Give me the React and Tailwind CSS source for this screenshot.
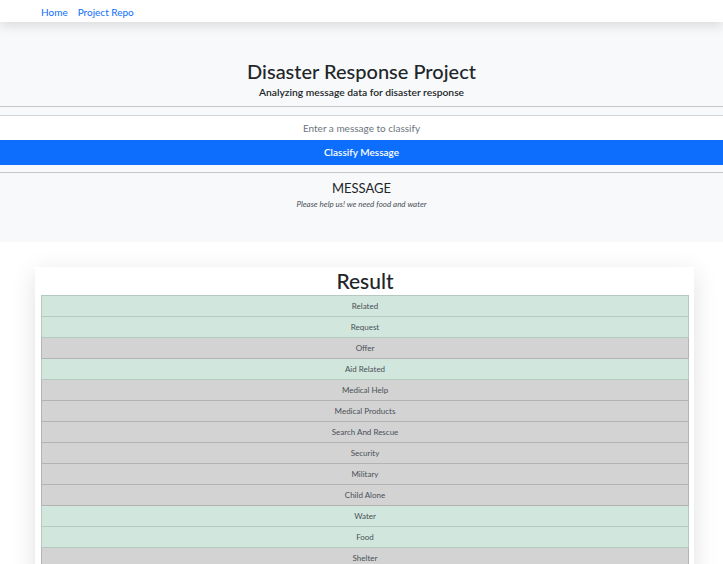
import React from 'react';

const categories = [
  ['Related', true],
  ['Request', true],
  ['Offer', false],
  ['Aid Related', true],
  ['Medical Help', false],
  ['Medical Products', false],
  ['Search And Rescue', false],
  ['Security', false],
  ['Military', false],
  ['Child Alone', false],
  ['Water', true],
  ['Food', true],
  ['Shelter', false],
  ['Clothing', false],
  ['Money', false],
];

const App = () => {
  return (
    <div className="min-h-screen bg-white text-[#212529]" style={{ fontFamily: 'Lato, "Open Sans", sans-serif' }}>
      {/* navbar */}
      <nav className="relative z-10 flex h-[22px] items-center gap-[10px] bg-white pl-[41px] pt-[2px] text-[10px] shadow-[0_4px_12px_rgba(0,0,0,0.12)]">
        <a href="#" className="text-[#0d6efd]">Home</a>
        <a href="#" className="text-[#0d6efd]">Project Repo</a>
      </nav>

      {/* jumbotron */}
      <div className="h-[220px] bg-[#f8f9fa] pt-[36px]">
        <h1 className="text-center text-[20px] font-medium leading-[26px]">Disaster Response Project</h1>
        <p className="mt-[1px] text-center text-[10.3px] font-semibold leading-[14px]">Analyzing message data for disaster response</p>
        <hr className="mt-[7px] border-t border-[#c6c7c8]" />
        <div className="mt-[8px] border-t border-[#ced4da]">
          <input
            type="text"
            placeholder="Enter a message to classify"
            className="block h-[24px] w-full bg-white text-center text-[10px] text-[#212529] outline-none placeholder:text-[#6c757d]"
          />
          <button type="button" className="block h-[25px] w-full bg-[#0d6efd] pb-[1px] text-[10px] font-semibold text-white">
            Classify Message
          </button>
        </div>
        <hr className="mt-[7px] border-t border-[#c6c7c8]" />
        <h2 className="mt-[7px] text-center text-[13px] leading-[16px]">MESSAGE</h2>
        <p className="mt-[2px] text-center text-[8px] italic text-[#495057]">Please help us! we need food and water</p>
      </div>

      {/* result card */}
      <div className="ml-[35px] mt-[25px] w-[659px] bg-white pb-[6px] pl-[6px] pr-[5px] shadow-[0_6px_24px_rgba(0,0,0,0.12)]">
        <h2 className="text-center text-[21px] font-medium leading-[28px]">Result</h2>
        <ul className="border-t border-[#b5c9be]">
          {categories.map(([name, on]) => (
            <li
              key={name}
              className={`flex h-[21px] items-center justify-center border-x border-b text-[8px] text-[#495057] ${
                on ? 'border-[#b5c9be] bg-[#d1e7dd]' : 'border-[#b3b3b3] bg-[#d3d3d3]'
              }`}
            >
              {name}
            </li>
          ))}
        </ul>
      </div>
    </div>
  );
};

export default App;
